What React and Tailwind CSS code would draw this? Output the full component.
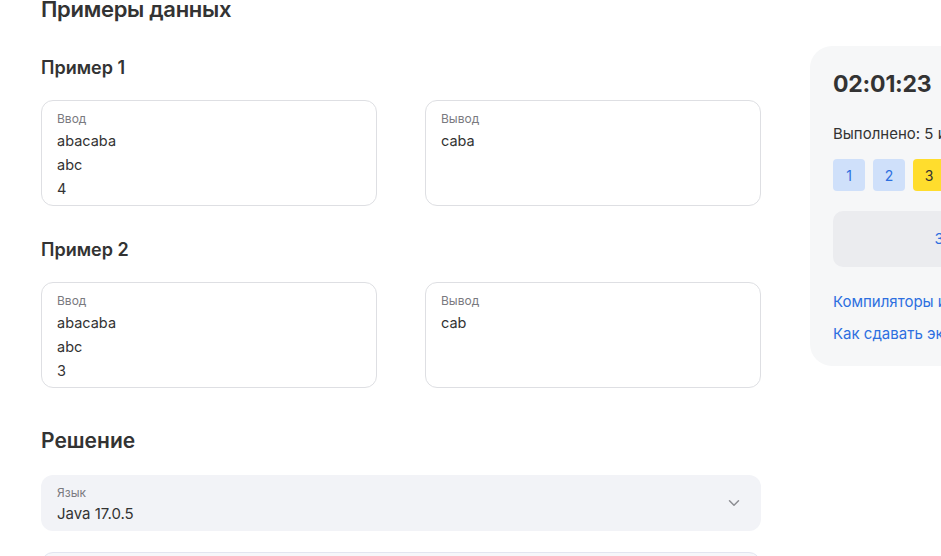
import React from 'react';
import { ChevronDown } from 'lucide-react';

const examples = [
  { title: 'Пример 1', input: ['abacaba', 'abc', '4'], output: ['caba'] },
  { title: 'Пример 2', input: ['abacaba', 'abc', '3'], output: ['cab'] },
];

function DataBox({ label, lines }) {
  return (
    <div className="h-[106px] rounded-xl border border-[#dedfe3] bg-white px-[15px] pt-[10px]">
      <div className="mb-[2px] text-[12px] leading-[16px] text-[#7a7a7f]">{label}</div>
      {lines.map((l, i) => (
        <div key={i} className="text-[14.5px] leading-[24px] text-[#333]">{l}</div>
      ))}
    </div>
  );
}

export default function App() {
  return (
    <div className="h-[556px] w-[941px] overflow-hidden bg-white font-['Inter',sans-serif] text-[#333]">
      <div className="flex gap-[49px] pl-[41px] -mt-[5px]">
        {/* основная колонка */}
        <div className="w-[720px] shrink-0">
          <h2 className="text-[22px] leading-[28px] font-semibold tracking-[-0.3px] text-[#333]">Примеры данных</h2>

          <div className="mt-[33px]">
            <h3 className="text-[18px] leading-[24px] font-semibold text-[#333]">{examples[0].title}</h3>
            <div className="mt-[20px] grid grid-cols-2 gap-[48px]">
              <DataBox label="Ввод" lines={examples[0].input} />
              <DataBox label="Вывод" lines={examples[0].output} />
            </div>
          </div>

          <div className="mt-[32px]">
            <h3 className="text-[18px] leading-[24px] font-semibold text-[#333]">{examples[1].title}</h3>
            <div className="mt-[20px] grid grid-cols-2 gap-[48px]">
              <DataBox label="Ввод" lines={examples[1].input} />
              <DataBox label="Вывод" lines={examples[1].output} />
            </div>
          </div>

          <h3 className="mt-[40px] text-[21px] leading-[26px] font-semibold text-[#333]">Решение</h3>

          <div className="mt-[21px] flex h-[56px] items-center justify-between rounded-xl bg-[#f2f3f7] pl-[16px] pr-[18px]">
            <div className="pt-[2px]">
              <div className="text-[12px] leading-[16px] text-[#7a7a7f]">Язык</div>
              <div className="mt-[3px] text-[15px] leading-[20px] text-[#333]">Java 17.0.5</div>
            </div>
            <ChevronDown className="h-[18px] w-[18px] text-[#8d8e93]" strokeWidth={2} />
          </div>

          <div className="mt-[21px] h-[200px] rounded-xl border border-[#e2e5f0] bg-[#f6f7fa]" />
        </div>

        {/* боковая панель */}
        <div className="mt-[51px] h-[320px] w-[300px] shrink-0 rounded-[22px] bg-[#f6f7f8] px-[23px] pt-[23px]">
          <div className="text-[23px] leading-[30px] font-bold tracking-[-0.2px] text-[#333]">02:01:23</div>
          <div className="mt-[25px] text-[15px] leading-[20px] text-[#333]">Выполнено: 5 из 6</div>
          <div className="mt-[15px] flex gap-[8px]">
            {['1', '2'].map((n) => (
              <div key={n} className="flex h-[32px] w-[32px] items-center justify-center rounded-[4px] bg-[#cfe0fa] text-[14px] text-[#2d6fe0]">{n}</div>
            ))}
            <div className="flex h-[32px] w-[32px] items-center justify-center rounded-[4px] bg-[#ffdd2d] text-[14px] text-[#333]">3</div>
            {['4', '5', '6'].map((n) => (
              <div key={n} className="flex h-[32px] w-[32px] items-center justify-center rounded-[4px] bg-[#cfe0fa] text-[14px] text-[#2d6fe0]">{n}</div>
            ))}
          </div>
          <button className="mt-[20px] flex h-[56px] w-full items-center justify-center rounded-[10px] bg-[#ebecef] text-[15px] text-[#2d6fe0]">
            <span className="ml-[30px]">Завершить</span>
          </button>
          <div className="mt-[25px] text-[15px] leading-[20px] text-[#2d6fe0]">Компиляторы и интерпретаторы</div>
          <div className="mt-[12px] text-[15px] leading-[20px] text-[#2d6fe0]">Как сдавать экзамен</div>
        </div>
      </div>
    </div>
  );
}
